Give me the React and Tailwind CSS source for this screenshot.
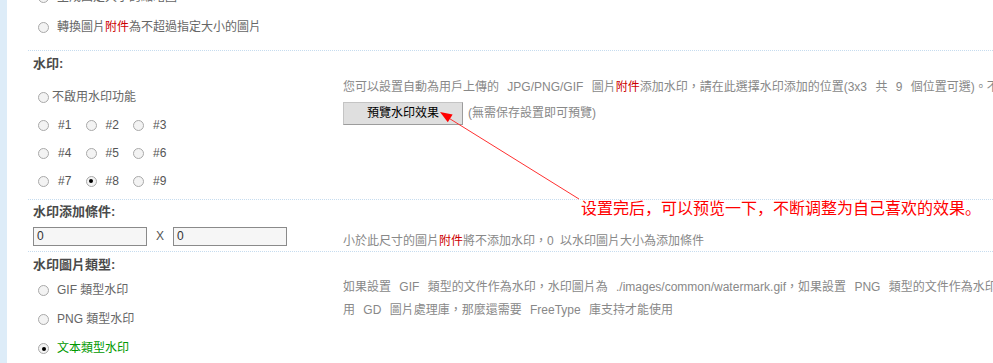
import React from 'react';

function Radio({ checked }) {
  return (
    <span className="w-[11px] h-[11px] shrink-0 rounded-full border border-[#a9a9a9] bg-[#f3f3f3] flex items-center justify-center">
      {checked && <span className="w-[4px] h-[4px] rounded-full bg-black" />}
    </span>
  );
}

function Sep() {
  return <div className="border-t border-dotted border-[#c6dcef]" />;
}

function Title({ children }) {
  return (
    <div className="h-[24px] flex items-center pl-[5px] text-[13px] font-bold text-[#4a4a4a]">
      {children}
    </div>
  );
}

function RadioRow({ checked, children, gap = 'gap-[8px]', h = 'h-[30px]' }) {
  return (
    <div className={`${h} flex items-center pl-[10px] ${gap}`}>
      <Radio checked={checked} />
      <span>{children}</span>
    </div>
  );
}

const Red = ({ children }) => <span className="text-[#cc0000]">{children}</span>;

export default function App() {
  const positions = [[1, 2, 3], [4, 5, 6], [7, 8, 9]];

  return (
    <div className="relative w-[993px] h-[363px] overflow-hidden bg-white flex text-[12px] leading-[15px] text-[#666] font-['Liberation_Sans','Noto_Sans_CJK_TC',sans-serif]">
      <div className="w-[7px] shrink-0 bg-[#ddecf8]" />
      <div className="flex-1 min-w-0 pl-[21px]">
        {/* 縮略圖 */}
        <div className="mt-[-18px] pb-[8px]">
          <RadioRow>生成固定大小的縮略圖</RadioRow>
          <RadioRow>轉換圖片<Red>附件</Red>為不超過指定大小的圖片</RadioRow>
        </div>
        <Sep />

        {/* 水印 */}
        <Title>水印:</Title>
        <div className="grid grid-cols-[315px_1fr]">
          <div className="pt-[8px] pb-[4px]">
            <RadioRow h="h-[28px]" gap="gap-[3px]">不啟用水印功能</RadioRow>
            {positions.map(row => (
              <div key={row[0]} className="h-[28px] flex items-center pl-[10px]">
                {row.map(n => (
                  <div key={n} className="w-[47.5px] flex items-center gap-[9px] text-[#555]">
                    <Radio checked={n === 8} />
                    <span>#{n}</span>
                  </div>
                ))}
              </div>
            ))}
          </div>
          <div className="pt-[5px] min-w-0 overflow-hidden text-[#888]">
            <div className="whitespace-nowrap [word-spacing:5px]">
              您可以設置自動為用戶上傳的 JPG/PNG/GIF 圖片<Red>附件</Red>添加水印，請在此選擇水印添加的位置(3x3 共 9 個位置可選)。不選擇將不啟用水印功能
            </div>
            <div className="mt-[7px] flex items-center">
              <button className="w-[120px] h-[23px] bg-[#dfdfdf] border border-[#9c9c9c] border-t-[#c4c4c4] border-l-[#c4c4c4] text-black">
                預覽水印效果
              </button>
              <span className="ml-[5px]">(無需保存設置即可預覽)</span>
            </div>
          </div>
        </div>
        <Sep />

        {/* 水印添加條件 */}
        <div className="h-[23px] flex items-center pl-[5px] text-[13px] font-bold text-[#4a4a4a]">水印添加條件:</div>
        <div className="grid grid-cols-[315px_1fr] h-[28px]">
          <div className="pt-[4px] pl-[5px] flex items-start">
            <div className="w-[114px] h-[19px] border border-[#8a8a8a] bg-[#f6f6f6] pl-[3px] flex items-center text-[#333]">0</div>
            <span className="mx-[9px] h-[19px] flex items-center text-[#555]">X</span>
            <div className="w-[114px] h-[19px] border border-[#8a8a8a] bg-[#f6f6f6] pl-[3px] flex items-center text-[#333]">0</div>
          </div>
          <div className="flex items-center pt-[8px] text-[#888] whitespace-nowrap [word-spacing:3px]">
            小於此尺寸的圖片<Red>附件</Red>將不添加水印，0 以水印圖片大小為添加條件
          </div>
        </div>
        <Sep />

        {/* 水印圖片類型 */}
        <Title>水印圖片類型:</Title>
        <div className="grid grid-cols-[315px_1fr]">
          <div>
            <RadioRow h="h-[29px]">GIF 類型水印</RadioRow>
            <RadioRow h="h-[29px]">PNG 類型水印</RadioRow>
            <RadioRow h="h-[29px]" checked><span className="text-[#009900]">文本類型水印</span></RadioRow>
          </div>
          <div className="min-w-0 overflow-hidden text-[#888] leading-[23px] [word-spacing:5px]">
            <div className="whitespace-nowrap">
              如果設置 GIF 類型的文件作為水印，水印圖片為 ./images/common/watermark.gif，如果設置 PNG 類型的文件作為水印，水印圖片為 ./images/common/watermark.png，如果設置文本類型水印，需要您的服務器支持 FreeType 並使
            </div>
            <div className="whitespace-nowrap">用 GD 圖片處理庫，那麼還需要 FreeType 庫支持才能使用</div>
          </div>
        </div>
      </div>

      {/* annotation */}
      <svg className="absolute inset-0 pointer-events-none" width="993" height="363">
        <line x1="579" y1="199" x2="447" y2="117" stroke="#ff3030" strokeWidth="1" />
        <polygon points="440,112 447.8,122.2 452.6,114.6" fill="#ff0000" />
      </svg>
      <div className="absolute left-[581px] top-[198px] text-[16px] leading-[18px] text-[#ff0000] whitespace-nowrap font-['Noto_Sans_CJK_SC',sans-serif]">
        设置完后，可以预览一下，不断调整为自己喜欢的效果。
      </div>
    </div>
  );
}
